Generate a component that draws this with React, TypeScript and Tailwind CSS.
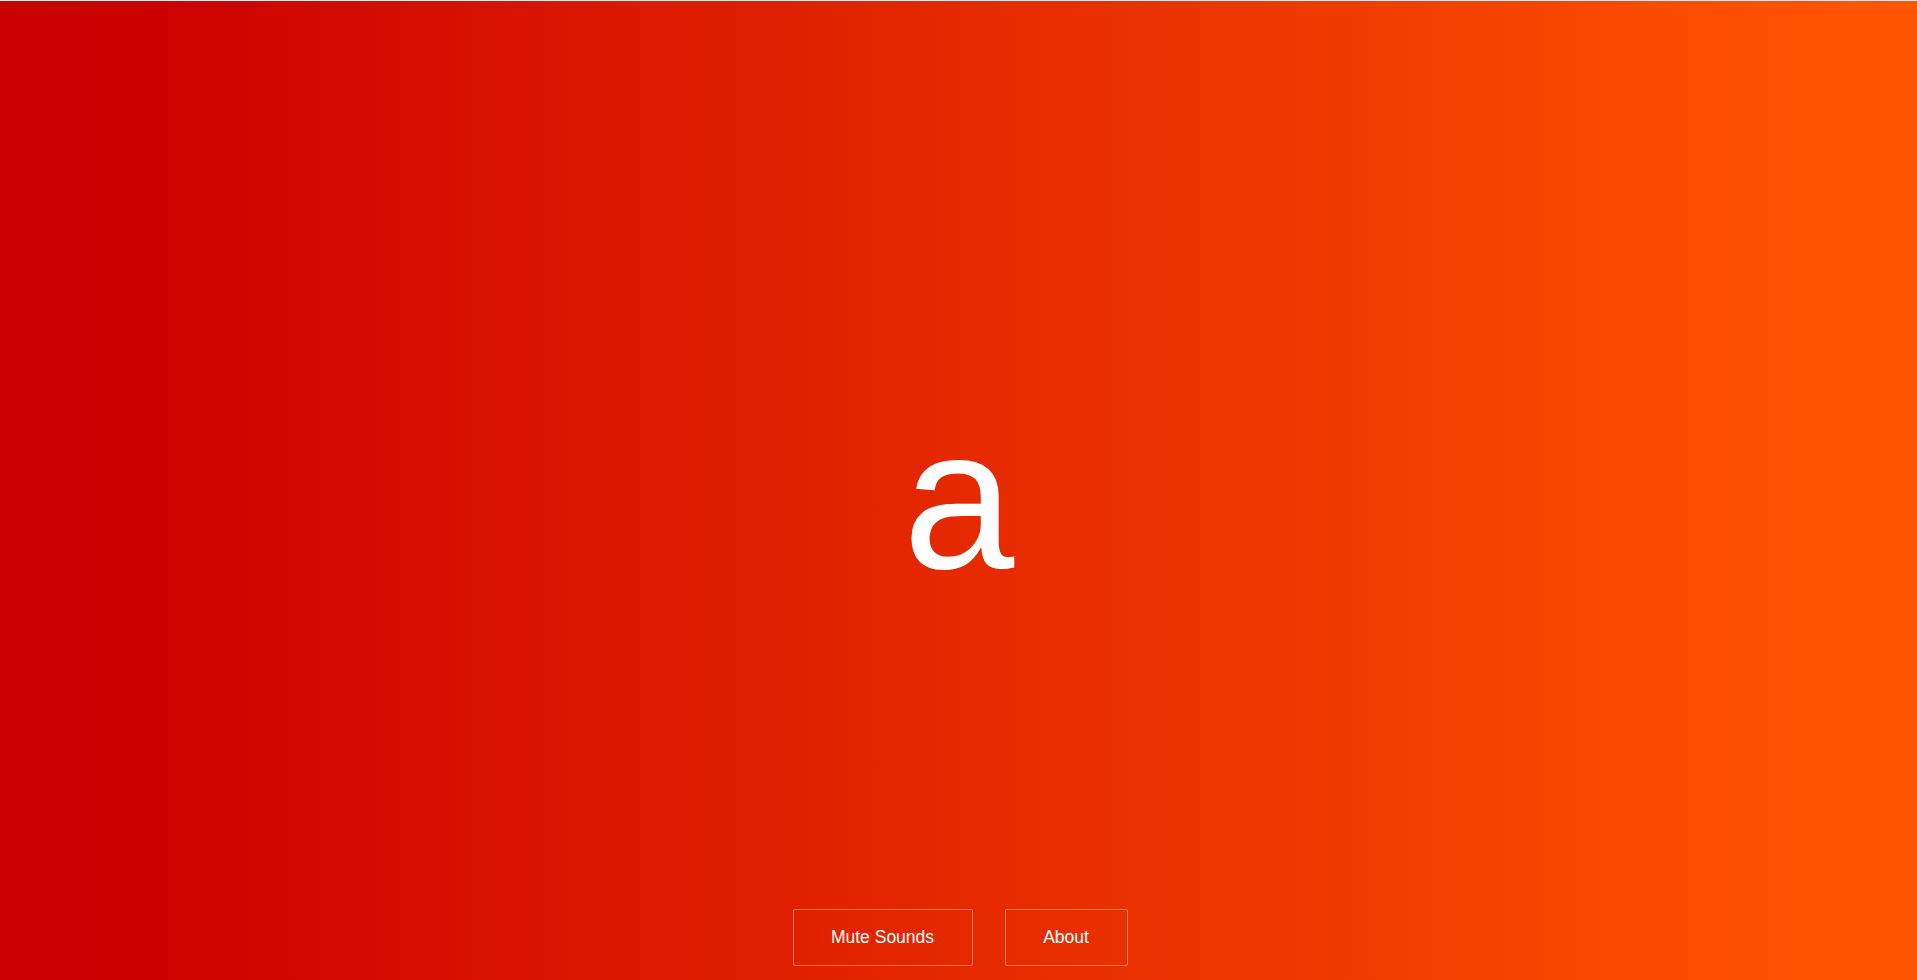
export default function App() {
  return (
    <div className="flex h-[980px] w-full flex-col overflow-hidden bg-[linear-gradient(to_right,#c80000_0%,#cc0200_8%,#ff5200_95%,#ff5500_100%)] font-['Liberation_Sans',Arial,sans-serif] text-white">
      <div className="h-px w-full bg-[#eadcd6]" />
      <main className="flex flex-1 items-center justify-center pt-[88px]">
        <span className="text-[200px] leading-[1.15]">a</span>
      </main>
      <footer className="flex justify-center gap-8 pb-[14px] pl-[3px]">
        <button className="h-[57px] w-[180px] rounded-[2px] border border-white/40 text-[17.5px] text-white">
          Mute Sounds
        </button>
        <button className="h-[57px] w-[123px] rounded-[2px] border border-white/40 text-[17.5px] text-white">
          About
        </button>
      </footer>
    </div>
  );
}
